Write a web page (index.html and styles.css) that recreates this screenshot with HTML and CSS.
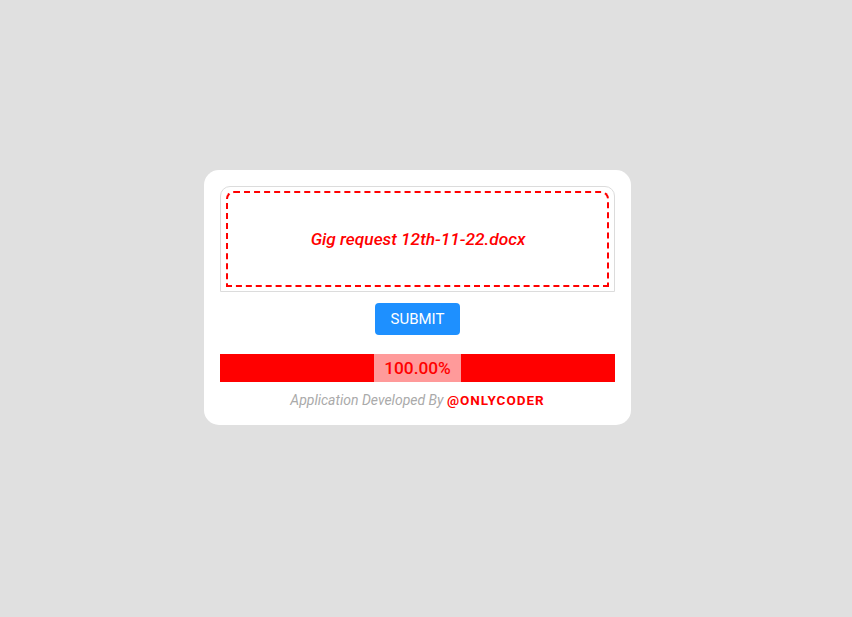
FILE: index.html
```html
<!DOCTYPE html>
<html>
<head>
<meta charset="utf-8">
<link rel="stylesheet" href="styles.css">
</head>
<body>
<div class="card">
  <label class="drop">
    <span class="drop-inner"><span class="fname">Gig request 12th-11-22.docx</span></span>
  </label>
  <div class="actions"><button class="submit">SUBMIT</button></div>
  <div class="progress"><span class="pct">100.00%</span></div>
  <p class="credit">Application Developed By <b>@ONLYCODER</b></p>
</div>
</body>
</html>
```
FILE: styles.css
```css
html, body { margin: 0; padding: 0; }
body {
  background: #e0e0e0;
  width: 852px;
  height: 617px;
  box-sizing: border-box;
  padding: 170px 0 0 204px;
  font-family: Roboto, "Liberation Sans", sans-serif;
}
.card {
  width: 427px;
  height: 255px;
  box-sizing: border-box;
  background: #fff;
  border-radius: 15px;
  padding: 16px;
  display: flex;
  flex-direction: column;
}
.drop {
  display: block;
  height: 106px;
  box-sizing: border-box;
  border: 1px solid #dcdcdc;
  border-radius: 10px 10px 0 0;
  padding: 4px 5px 4px 5px;
}
.drop-inner {
  display: flex;
  align-items: center;
  justify-content: center;
  height: 100%;
  box-sizing: border-box;
  border: 2px dashed #ff0000;
  border-radius: 8px 8px 0 0;
}
.fname {
  color: #ff0000;
  font-style: italic;
  font-weight: 500;
  font-size: 17.3px;
  margin-top: -1px;
  margin-left: 1px;
}
.actions {
  display: flex;
  justify-content: center;
  margin-top: 11px;
}
.submit {
  width: 85px;
  height: 32px;
  border: none;
  border-radius: 4px;
  background: #1e90ff;
  color: #fff;
  font-family: Roboto, "Liberation Sans", sans-serif;
  font-size: 15px;
  padding: 0;
}
.progress {
  margin-top: 19px;
  height: 28px;
  background: #ff0000;
  display: flex;
  justify-content: center;
}
.pct {
  width: 87px;
  background: #ff9a9a;
  color: #ff0000;
  font-size: 17.3px;
  font-weight: 500;
  display: flex;
  align-items: center;
  justify-content: center;
}
.credit {
  margin: 10px 0 0;
  text-align: center;
  color: #aaaaaa;
  font-style: italic;
  font-size: 14px;
}
.credit b {
  font-style: normal;
  font-weight: 700;
  color: #ff0000;
  font-size: 13.5px;
  letter-spacing: 1px;
}
```
